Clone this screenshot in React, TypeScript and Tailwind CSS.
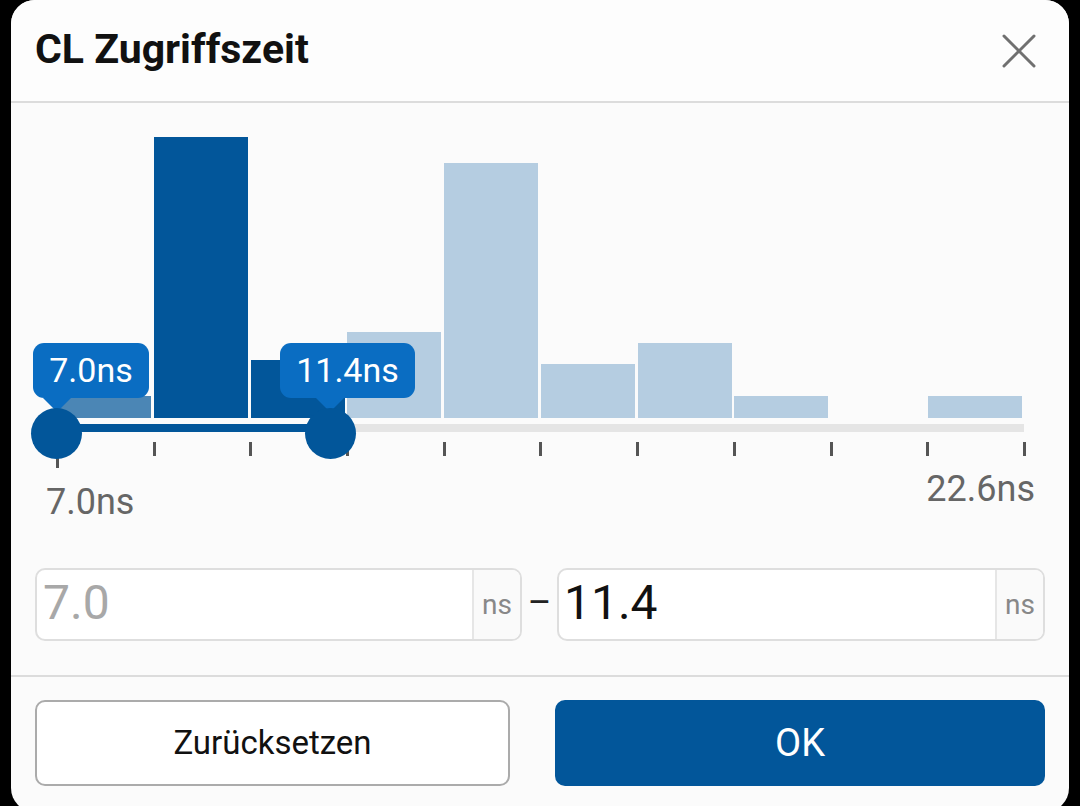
import React from "react";

const DARK = "#02569a";

const bars: { h: number; c: string }[] = [
  { h: 22, c: "#4b86b5" },
  { h: 281, c: DARK },
  { h: 58, c: DARK },
  { h: 86, c: "#b5cde1" },
  { h: 255, c: "#b5cde1" },
  { h: 54, c: "#b5cde1" },
  { h: 75, c: "#b5cde1" },
  { h: 22, c: "#b5cde1" },
  { h: 0, c: "#b5cde1" },
  { h: 22, c: "#b5cde1" },
];

function Tooltip({ left, width, arrowLeft, text }: { left: number; width: number; arrowLeft: number; text: string }) {
  return (
    <>
      <div
        className="absolute top-[225px] h-[55px] rounded-[11px] bg-[#0a6dc2] text-white text-[34px] leading-[55px] text-center"
        style={{ left, width }}
      >
        {text}
      </div>
      <div
        className="absolute top-[280px] w-0 h-0 border-l-[14px] border-r-[14px] border-t-[14px] border-l-transparent border-r-transparent border-t-[#0a6dc2]"
        style={{ left: arrowLeft }}
      />
    </>
  );
}

export default function App() {
  return (
    <div
      className="w-[1080px] h-[806px] bg-black overflow-hidden pl-[11px]"
      style={{ fontFamily: "Roboto, 'Noto Sans', sans-serif" }}
    >
      <div className="w-[1058px] h-[812px] bg-[#fbfbfb] rounded-[24px] flex flex-col">
        {/* Header */}
        <div className="h-[103px] shrink-0 flex items-center justify-between pl-[24px] pr-[34px] border-b-[2px] border-[#dcdcdc] bg-[#fdfdfd] rounded-t-[24px]">
          <div className="text-[41px] font-bold text-[#111] mb-[4px] leading-[50px]">CL Zugriffszeit</div>
          <svg width="34" height="34" viewBox="0 0 34 34" className="mr-[-1px]">
            <line x1="2" y1="2" x2="32" y2="32" stroke="#707070" strokeWidth="3" strokeLinecap="round" />
            <line x1="32" y1="2" x2="2" y2="32" stroke="#707070" strokeWidth="3" strokeLinecap="round" />
          </svg>
        </div>

        {/* Body */}
        <div className="px-[24px] pt-[15px] flex flex-col">
          <div className="relative ml-[22px] w-[967px]">
            <div className="h-[300px] flex items-end gap-[2.75px]">
              {bars.map((b, i) => (
                <div key={i} className="w-[94px] shrink-0" style={{ height: b.h, backgroundColor: b.c }} />
              ))}
            </div>
            <div className="mt-[6px] h-[8px] bg-[#e5e5e5] flex">
              <div className="w-[273px] h-full bg-[#02569a]" />
            </div>
            <div className="mt-[10px] h-[14px] -ml-[1px] w-[970px] flex justify-between items-start">
              {Array.from({ length: 11 }).map((_, i) => (
                <div key={i} className={i === 0 ? "w-[3px] h-[26px] bg-[#555]" : "w-[3px] h-[14px] bg-[#555]"} />
              ))}
            </div>

            <Tooltip left={-24} width={116} arrowLeft={-14} text="7.0ns" />
            <Tooltip left={223} width={135} arrowLeft={259} text="11.4ns" />

            <div className="absolute top-[290px] left-[-26px] w-[51px] h-[51px] rounded-full bg-[#02569a]" />
            <div className="absolute top-[290px] left-[248px] w-[51px] h-[51px] rounded-full bg-[#02569a]" />
          </div>

          <div className="h-[112px] flex justify-between items-start pt-[13px] pl-[11px] pr-[10px] text-[36px] leading-[40px] text-[#666]">
            <div className="mt-[13px]">7.0ns</div>
            <div>22.6ns</div>
          </div>

          <div className="h-[73px] flex items-stretch">
            <div className="w-[487px] flex border-[2px] border-[#dedede] rounded-[10px] bg-white overflow-hidden">
              <div className="flex-1 flex items-center pl-[6px] pb-[3px] text-[48px] text-[#a8a8a8]">7.0</div>
              <div className="w-[48px] flex items-center justify-center border-l-[2px] border-[#e6e6e6] bg-[#fafafa] text-[28px] text-[#888]">ns</div>
            </div>
            <div className="w-[35px] flex items-center justify-center text-[36px] text-[#222] pb-[4px]">–</div>
            <div className="flex-1 flex border-[2px] border-[#dedede] rounded-[10px] bg-white overflow-hidden">
              <div className="flex-1 flex items-center pl-[5px] pb-[3px] text-[48px] text-[#111]">11.4</div>
              <div className="w-[48px] flex items-center justify-center border-l-[2px] border-[#e6e6e6] bg-[#fafafa] text-[28px] text-[#888]">ns</div>
            </div>
          </div>
        </div>

        {/* Footer */}
        <div className="mt-[34px] border-t-[2px] border-[#dcdcdc] pt-[23px] px-[24px] flex justify-between">
          <button className="w-[475px] h-[86px] rounded-[10px] border-[2px] border-[#ababab] bg-white text-[33px] text-[#111]">
            Zurücksetzen
          </button>
          <button className="w-[490px] h-[86px] rounded-[10px] bg-[#02569a] text-[38px] text-white">OK</button>
        </div>
      </div>
    </div>
  );
}
